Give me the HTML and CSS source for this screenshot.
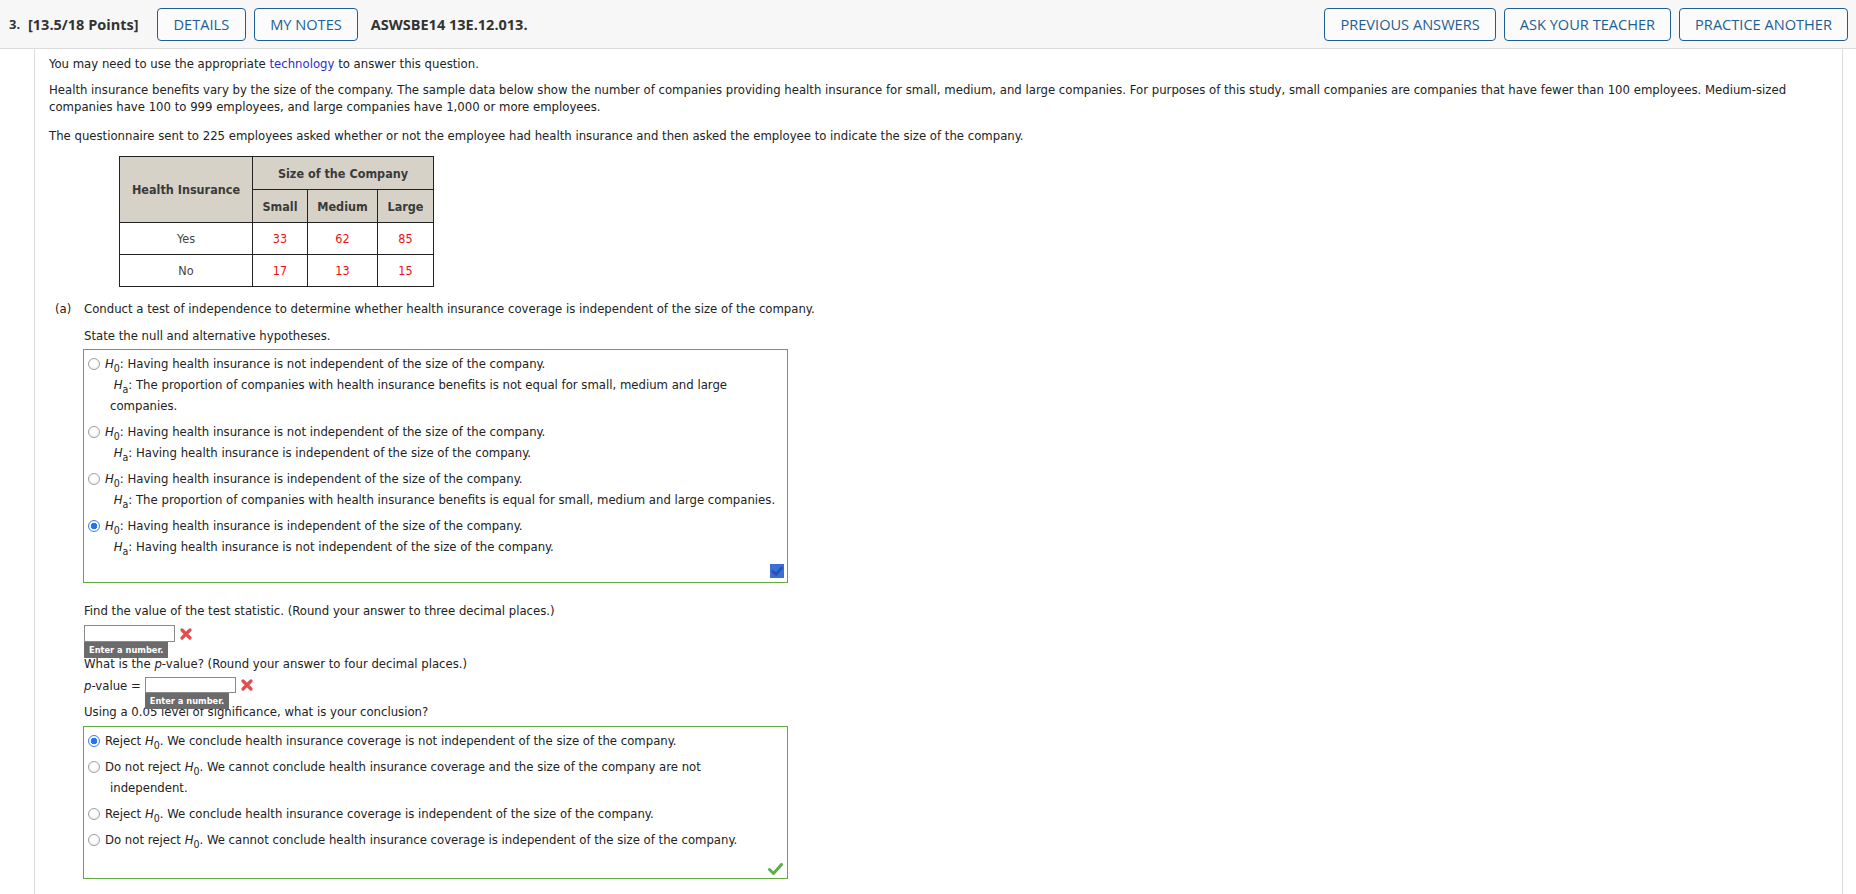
FILE: index.html
```html
<!DOCTYPE html>
<html>
<head>
<meta charset="utf-8">
<link rel="stylesheet" href="styles.css">
</head>
<body>
<div class="header">
  <span class="qnum">3.</span>
  <span class="points">[13.5/18 Points]</span>
  <button class="btn first">DETAILS</button>
  <button class="btn">MY NOTES</button>
  <span class="qcode">ASWSBE14 13E.12.013.</span>
  <span class="spacer"></span>
  <button class="btn">PREVIOUS ANSWERS</button>
  <button class="btn">ASK YOUR TEACHER</button>
  <button class="btn">PRACTICE ANOTHER</button>
</div>
<div class="main">
  <p class="p1">You may need to use the appropriate <span class="link">technology</span> to answer this question.</p>
  <p class="p2">Health insurance benefits vary by the size of the company. The sample data below show the number of companies providing health insurance for small, medium, and large companies. For purposes of this study, small companies are companies that have fewer than 100 employees. Medium-sized companies have 100 to 999 employees, and large companies have 1,000 or more employees.</p>
  <p class="p3">The questionnaire sent to 225 employees asked whether or not the employee had health insurance and then asked the employee to indicate the size of the company.</p>
  <table class="data">
    <colgroup><col class="c1"><col class="c2"><col class="c3"><col class="c4"></colgroup>
    <tr class="r1"><th rowspan="2">Health Insurance</th><th colspan="3">Size of the Company</th></tr>
    <tr class="r2"><th>Small</th><th>Medium</th><th>Large</th></tr>
    <tr class="r3"><td class="lab">Yes</td><td class="num">33</td><td class="num">62</td><td class="num">85</td></tr>
    <tr class="r4"><td class="lab">No</td><td class="num">17</td><td class="num">13</td><td class="num">15</td></tr>
  </table>
  <div class="part">
    <div class="plabel">(a)</div>
    <div class="pbody">
      <p class="pa">Conduct a test of independence to determine whether health insurance coverage is independent of the size of the company.</p>
      <p class="state">State the null and alternative hypotheses.</p>
      <div class="box box1">
        <div class="opt"><span class="radio"></span><div class="otext"><i>H</i><sub>0</sub>: Having health insurance is not independent of the size of the company.<br>&nbsp;<i>H</i><sub>a</sub>: The proportion of companies with health insurance benefits is not equal for small, medium and large companies.</div></div>
        <div class="opt"><span class="radio"></span><div class="otext"><i>H</i><sub>0</sub>: Having health insurance is not independent of the size of the company.<br>&nbsp;<i>H</i><sub>a</sub>: Having health insurance is independent of the size of the company.</div></div>
        <div class="opt"><span class="radio"></span><div class="otext"><i>H</i><sub>0</sub>: Having health insurance is independent of the size of the company.<br>&nbsp;<i>H</i><sub>a</sub>: The proportion of companies with health insurance benefits is equal for small, medium and large companies.</div></div>
        <div class="opt"><span class="radio on"></span><div class="otext"><i>H</i><sub>0</sub>: Having health insurance is independent of the size of the company.<br>&nbsp;<i>H</i><sub>a</sub>: Having health insurance is not independent of the size of the company.</div></div>
        <div class="mark"><span class="bluecheck"><svg width="14" height="14" viewBox="0 0 14 14"><path d="M3 7.5 L6 10.5 L11.5 4" fill="none" stroke="#2452b0" stroke-width="2.6" stroke-linecap="round" stroke-linejoin="round"/></svg></span></div>
      </div>
      <p class="find">Find the value of the test statistic. (Round your answer to three decimal places.)</p>
      <div class="inrow r-a">
        <span class="field"><span class="inp w1"></span><span class="tip">Enter a number.</span></span>
        <svg class="xmark" width="12" height="12" viewBox="0 0 12 12"><path d="M2 2 L10 10 M10 2 L2 10" stroke="#e34d4d" stroke-width="3.2" stroke-linecap="round"/></svg>
      </div>
      <p class="what">What is the <i>p</i>-value? (Round your answer to four decimal places.)</p>
      <div class="inrow r-b">
        <span class="pv"><i>p</i>-value =</span>
        <span class="field"><span class="inp w1"></span><span class="tip">Enter a number.</span></span>
        <svg class="xmark" width="12" height="12" viewBox="0 0 12 12"><path d="M2 2 L10 10 M10 2 L2 10" stroke="#e34d4d" stroke-width="3.2" stroke-linecap="round"/></svg>
      </div>
      <p class="using">Using a 0.05 level of significance, what is your conclusion?</p>
      <div class="box box2">
        <div class="opt"><span class="radio on"></span><div class="otext">Reject <i>H</i><sub>0</sub>. We conclude health insurance coverage is not independent of the size of the company.</div></div>
        <div class="opt"><span class="radio"></span><div class="otext">Do not reject <i>H</i><sub>0</sub>. We cannot conclude health insurance coverage and the size of the company are not independent.</div></div>
        <div class="opt"><span class="radio"></span><div class="otext">Reject <i>H</i><sub>0</sub>. We conclude health insurance coverage is independent of the size of the company.</div></div>
        <div class="opt"><span class="radio"></span><div class="otext">Do not reject <i>H</i><sub>0</sub>. We cannot conclude health insurance coverage is independent of the size of the company.</div></div>
        <div class="mark m2"><svg width="15" height="12" viewBox="0 0 15 12"><path d="M1.5 6.5 L5.5 10.5 L13.5 1.5" fill="none" stroke="#5cae4a" stroke-width="3" stroke-linecap="round" stroke-linejoin="round"/></svg></div>
      </div>
    </div>
  </div>
</div>
</body>
</html>
```

FILE: styles.css
```css
html, body {
  margin: 0;
  padding: 0;
  background: #ffffff;
}
body {
  width: 1856px;
  height: 894px;
  overflow: hidden;
  font-family: "DejaVu Sans Condensed", "DejaVu Sans", sans-serif;
  font-stretch: condensed;
  font-size: 13px;
  color: #222;
}
.header {
  height: 48px;
  background: #f7f7f7;
  border-bottom: 1px solid #dcdcdc;
  display: flex;
  align-items: center;
  padding: 0 8px 0 9px;
  font-family: "Open Sans", sans-serif;
  font-stretch: normal;
  color: #333;
}
.qnum {
  font-size: 13px;
  font-weight: 700;
  width: 19px;
}
.points {
  font-size: 14.5px;
  font-weight: 700;
  margin-right: 18px;
}
.qcode {
  font-size: 14.5px;
  font-weight: 700;
  margin-left: 13px;
}
.spacer { flex: 1; }
.btn {
  height: 33px;
  box-sizing: border-box;
  border: 1px solid #1d5e94;
  border-radius: 4px;
  background: #fbfbfb;
  color: #1d5e94;
  font-family: "Open Sans", sans-serif;
  font-size: 14.6px;
  font-weight: 500;
  padding: 0 15px;
  margin-left: 8px;
  cursor: pointer;
}
.btn.first { margin-left: 0; padding: 0 16px; }
.main {
  margin: 0 13px 0 34px;
  border-left: 1px solid #dcdcdc;
  border-right: 1px solid #dcdcdc;
  height: 845px;
  padding: 6px 0 0 14px;
  box-sizing: border-box;
}
p {
  margin: 0;
  line-height: 17px;
}
.link { color: #2d2dc8; }
.p2 { margin-top: 9px; }
.p3 { margin-top: 12px; }
.data {
  margin: 12px 0 0 70px;
  border-collapse: collapse;
  table-layout: fixed;
  width: 314px;
}
.c1 { width: 133px; }
.c2 { width: 55px; }
.c3 { width: 70px; }
.c4 { width: 56px; }
.data th, .data td {
  border: 1px solid #222;
  text-align: center;
  padding: 0;
}
.data th {
  background: #d6d2c7;
  color: #3a3a3a;
  font-weight: 700;
  font-size: 12.5px;
}
.r1 th, .r2 th { height: 32px; }
.r3 td, .r4 td { height: 31px; font-size: 12.5px; }
.data td.lab { color: #444; }
.data td.num { color: #ee1111; }
.part {
  display: flex;
  margin-left: 6px;
  margin-top: 13px;
}
.plabel {
  width: 29px;
  line-height: 17px;
}
.pbody { flex: none; }
.state { margin-top: 10px; }
.box {
  width: 705px;
  box-sizing: border-box;
  border: 1px solid #62a93f;
  margin-left: -1px;
}
.box1 {
  margin-top: 5px;
  padding: 3px 3px 4px 3px;
}
.box2 {
  margin-top: 6px;
  padding: 3px 3px 3px 3px;
}
.box2 .otext { max-width: 645px; }
.opt {
  display: flex;
  align-items: flex-start;
  margin-bottom: 5px;
}
.opt:last-of-type { margin-bottom: 0; }
.radio {
  flex: none;
  width: 12px;
  height: 12px;
  box-sizing: border-box;
  border-radius: 50%;
  border: 1px solid #a0a0a0;
  background: radial-gradient(circle at 50% 40%, #ffffff 40%, #e6e6e6 100%);
  margin: 4.5px 0 0 1px;
  position: relative;
}
.radio.on {
  border-color: #3f7fe0;
  background: radial-gradient(circle, #1f6fe5 0, #2a78ec 3px, #ffffff 3.6px, #eaf2ff 100%);
}
.otext {
  line-height: 21px;
  padding-left: 5px;
  text-indent: -5px;
  margin-left: 5px;
}
sub {
  font-size: 10.5px;
  vertical-align: -4px;
  line-height: 0;
}
i { font-style: italic; }
.mark {
  display: flex;
  justify-content: flex-end;
  margin-top: 7px;
}
.bluecheck {
  display: block;
  width: 14px;
  height: 14px;
  background: #3c6ed8;
}
.bluecheck svg { display: block; }
.m2 {
  margin-top: 13px;
  padding-right: 1px;
}
.m2 svg { display: block; }
.find { margin-top: 19px; }
.inrow {
  display: flex;
  align-items: center;
  height: 17px;
}
.r-a { margin-top: 6px; }
.r-b { margin-top: 5px; height: 16px; }
.field {
  position: relative;
  display: block;
}
.inp {
  display: block;
  width: 91px;
  height: 17px;
  box-sizing: border-box;
  border: 1px solid #8a8a8a;
  background: #fff;
}
.r-b .inp { height: 16px; }
.tip {
  position: absolute;
  left: 0;
  top: 100%;
  height: 16px;
  width: 84px;
  box-sizing: border-box;
  background: #6b6b6b;
  color: #ffffff;
  font-size: 9.2px;
  font-weight: 700;
  line-height: 16px;
  padding: 0 0 0 5px;
  white-space: nowrap;
  z-index: 2;
}
.xmark {
  margin-left: 5px;
  display: block;
}
.pv {
  margin-right: 4px;
  line-height: 17px;
}
.what { margin-top: 13px; }
.using { margin-top: 10px; }
```
